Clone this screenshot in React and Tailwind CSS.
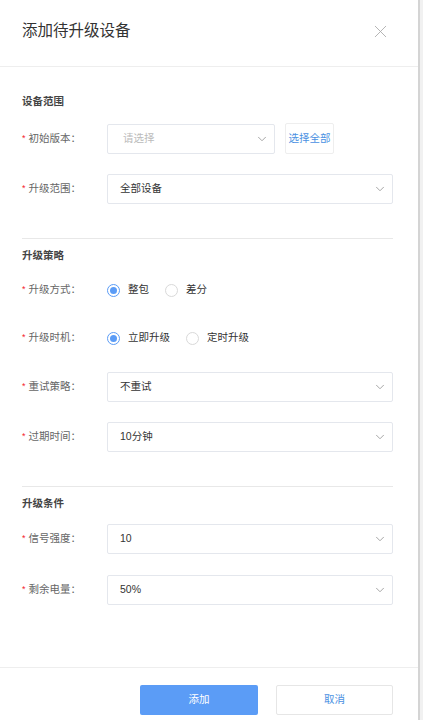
import { ChevronDown, X } from 'lucide-react'

const font = { fontFamily: '"Liberation Sans", "Noto Sans CJK SC", sans-serif' }

const Label = ({ text }) => (
  <div className="w-[85px] shrink-0 flex items-center text-[10.5px] text-[#666]">
    <span className="text-[#f5222d] mr-[3px] text-[9px]">*</span>
    <span>{text}：</span>
  </div>
)

const Select = ({ value, placeholder, className = 'flex-1' }) => (
  <div className={`${className} h-[30px] border border-[#e4e7ed] rounded-[2px] flex items-center justify-between pl-[12px] pr-[5px] text-[10.5px]`}>
    {value ? (
      <span className="text-[#333]">{value}</span>
    ) : (
      <span className="text-[#bbb] pl-[3px]">{placeholder}</span>
    )}
    <ChevronDown size={14} strokeWidth={1.5} className="text-[#999]" />
  </div>
)

const Radio = ({ checked, label }) => (
  <label className="flex items-center gap-[8px] mr-[16px] text-[10.5px] text-[#333]">
    <span
      className={`w-[13px] h-[13px] rounded-full border flex items-center justify-center ${
        checked ? 'border-[#5b9cf6]' : 'border-[#d9d9d9]'
      }`}
    >
      {checked && <span className="w-[7px] h-[7px] rounded-full bg-[#5b9cf6]" />}
    </span>
    {label}
  </label>
)

const SectionTitle = ({ children, className = '' }) => (
  <div className={`h-[16px] leading-[16px] text-[10.5px] font-bold text-[#444] ${className}`}>{children}</div>
)

export default function App() {
  return (
    <div className="w-[423px] h-[720px] flex bg-white overflow-hidden" style={font}>
      <div className="w-[418px] flex flex-col">
        {/* 头部 */}
        <div className="h-[67px] shrink-0 border-b border-[#eee] flex items-center justify-between pl-[22px] pr-[27px] pb-[4px]">
          <h2 className="text-[15.5px] text-[#333]">添加待升级设备</h2>
          <X size={21} strokeWidth={1} className="text-[#aaa]" />
        </div>

        <div className="flex-1 pl-[22px] pr-[25px]">
          {/* 设备范围 */}
          <SectionTitle className="mt-[26px]">设备范围</SectionTitle>
          <div className="mt-[14px] flex items-center">
            <Label text="初始版本" />
            <Select placeholder="请选择" className="w-[168px]" />
            <button className="ml-[10px] h-[31px] w-[49px] border border-[#eee] rounded-[2px] text-[10.5px] text-[#4a90e2] whitespace-nowrap">
              选择全部
            </button>
          </div>
          <div className="mt-[20px] flex items-center">
            <Label text="升级范围" />
            <Select value="全部设备" />
          </div>
          <div className="mt-[34px] border-t border-[#e8e8e8]" />

          {/* 升级策略 */}
          <SectionTitle className="mt-[8px]">升级策略</SectionTitle>
          <div className="mt-[12px] h-[30px] flex items-center">
            <Label text="升级方式" />
            <div className="flex items-center">
              <Radio checked label="整包" />
              <Radio label="差分" />
            </div>
          </div>
          <div className="mt-[18px] h-[30px] flex items-center">
            <Label text="升级时机" />
            <div className="flex items-center">
              <Radio checked label="立即升级" />
              <Radio label="定时升级" />
            </div>
          </div>
          <div className="mt-[19px] flex items-center">
            <Label text="重试策略" />
            <Select value="不重试" />
          </div>
          <div className="mt-[20px] flex items-center">
            <Label text="过期时间" />
            <Select value="10分钟" />
          </div>
          <div className="mt-[34px] border-t border-[#e8e8e8]" />

          {/* 升级条件 */}
          <SectionTitle className="mt-[8px]">升级条件</SectionTitle>
          <div className="mt-[13px] flex items-center">
            <Label text="信号强度" />
            <Select value="10" />
          </div>
          <div className="mt-[21px] flex items-center">
            <Label text="剩余电量" />
            <Select value="50%" />
          </div>
        </div>

        {/* 底部按钮 */}
        <div className="h-[53px] shrink-0 border-t border-[#eee] flex items-start justify-end gap-[18px] pt-[17px] pr-[25px]">
          <button className="w-[118px] h-[30px] rounded-[2px] bg-[#5b9cf6] text-white text-[10.5px]">添加</button>
          <button className="w-[117px] h-[30px] rounded-[2px] border border-[#e6e6e6] text-[#4a90e2] text-[10.5px]">取消</button>
        </div>
      </div>
      <div className="w-[5px] border-l-2 border-[#d4d4d4] bg-[#f1f1f1]" />
    </div>
  )
}
